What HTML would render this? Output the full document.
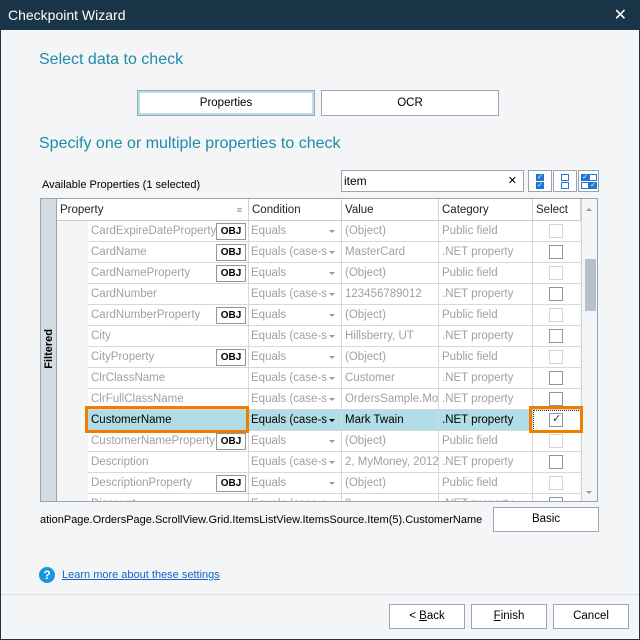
<!DOCTYPE html>
<html><head><meta charset="utf-8"><style>
*{box-sizing:border-box;margin:0;padding:0}
body{width:640px;height:640px;overflow:hidden;background:#f4f5f7;font-family:"Liberation Sans",sans-serif;font-size:12px;color:#000;position:relative}
.a{position:absolute}
.title{left:0;top:0;width:640px;height:30px;background:#1b3548;color:#fff;font-size:14px;padding:7px 0 0 8px}
.frame{left:0;top:30px;width:640px;height:610px;border:1px solid #1b3548;border-top:0}
.h1{color:#1f8ba5;font-size:16px}
.btn{background:#fff;border:1px solid #9aa4b2;text-align:center;font-size:12px}
.grid{left:40px;top:198px;width:558px;height:304px;border:1px solid #9aa4b2;background:#f4f5f7;overflow:hidden}
.cell{position:absolute;height:21px;line-height:20px;border-right:1px solid #d8d8d8;border-bottom:1px solid #d8d8d8;background:#fff;color:#a0a0a0;padding-left:3px;white-space:nowrap;overflow:hidden;font-size:11.5px}
.hd{position:absolute;top:0;height:22px;line-height:22px;background:#fff;border-right:1px solid #d0d0d0;border-bottom:1px solid #c8c8c8;padding-left:3px;color:#222;font-size:11.5px}
.obj{position:absolute;width:30px;height:17px;border:1px solid #8a96a6;background:#fff;color:#000;font-size:10px;font-weight:bold;text-align:center;line-height:15px}
.cb{position:absolute;width:14px;height:14px;border:1px solid #8a96a6;background:#fff}
.cb.l{border-color:#d4d4d4}
.dd{position:absolute;width:0;height:0;border-left:3px solid transparent;border-right:3px solid transparent;border-top:3px solid #999}
.ib{position:absolute;width:8px;height:7px;border:1px solid #1e78d0;background:#fff;font-size:7px;color:#fff;line-height:5px;text-align:center}
.ib.f{background:#1e78d0}
</style></head><body>
<div class="a title">Checkpoint Wizard<span class="a" style="right:13px;top:5px;font-size:16px">✕</span></div>
<div class="a frame"></div>
<div class="a h1" style="left:39px;top:51px">Select data to check</div>
<div class="a btn" style="left:137px;top:90px;width:178px;height:26px;box-shadow:inset 0 0 0 2px #b7dfe8;line-height:24px;font-size:11.5px">Properties</div>
<div class="a btn" style="left:321px;top:90px;width:178px;height:26px;line-height:24px;font-size:11.5px">OCR</div>
<div class="a h1" style="left:39px;top:135px">Specify one or multiple properties to check</div>
<div class="a" style="left:42px;top:179px;font-size:11px">Available Properties (1 selected)</div>
<div class="a" style="left:341px;top:170px;width:183px;height:22px;background:#fff;border:1px solid #9aa4b2;padding:3px 0 0 2px;font-size:12px">item<span class="a" style="right:6px;top:3px;font-size:11px">✕</span></div>
<div class="a" style="left:528px;top:170px;width:24px;height:22px;background:#fff;border:1px solid #9aa4b2"><div class="ib f" style="left:7px;top:3px">✓</div><div class="ib f" style="left:7px;top:11px">✓</div></div>
<div class="a" style="left:553px;top:170px;width:24px;height:22px;background:#fff;border:1px solid #9aa4b2"><div class="ib" style="left:7px;top:3px"></div><div class="ib" style="left:7px;top:11px"></div></div>
<div class="a" style="left:578px;top:170px;width:21px;height:22px;background:#fff;border:1px solid #9aa4b2"><div class="ib f" style="left:2px;top:3px">✓</div><div class="ib" style="left:10px;top:3px"></div><div class="ib" style="left:2px;top:11px"></div><div class="ib f" style="left:10px;top:11px">✓</div></div>

<div class="a grid">
<div class="a" style="left:0;top:0;width:16px;height:302px;background:#d3dce3;border-right:1px solid #9aa4b2"></div>
<div class="a" style="left:2px;top:130px;width:14px;font-weight:bold;font-size:11px;writing-mode:vertical-rl;transform:rotate(180deg)">Filtered</div>
<div class="a" style="left:17px;top:22px;width:31px;height:282px;background:#f4f5f7;border-right:1px solid #d8d8d8"></div>
<div class="hd" style="left:16px;width:192px">Property<span class="a" style="right:6px;top:0;font-size:9px;color:#888">≡</span></div>
<div class="hd" style="left:208px;width:93px">Condition</div>
<div class="hd" style="left:301px;width:97px">Value</div>
<div class="hd" style="left:398px;width:94px">Category</div>
<div class="hd" style="left:492px;width:48px">Select</div>
<div class="a" style="left:540px;top:0;width:18px;height:304px;background:#f4f5f7;border-left:1px solid #d0d0d0"></div>
<div class="a" style="left:544px;top:60px;width:11px;height:52px;background:#b8bfcc"></div>
<div class="dd" style="left:545px;top:9px;border-top:0;border-bottom:3px solid #999"></div>
<div class="dd" style="left:545px;top:292px"></div>
</div>
<div id="g" class="a" style="left:41px;top:199px;width:539px;height:302px;overflow:hidden"></div>
<script>
var R=[["CardExpireDateProperty",1,"Equals","(Object)","Public field",0],
["CardName",1,"Equals (case-se","MasterCard",".NET property",1],
["CardNameProperty",1,"Equals","(Object)","Public field",0],
["CardNumber",0,"Equals (case-se","123456789012",".NET property",1],
["CardNumberProperty",1,"Equals","(Object)","Public field",0],
["City",0,"Equals (case-se","Hillsberry, UT",".NET property",1],
["CityProperty",1,"Equals","(Object)","Public field",0],
["ClrClassName",0,"Equals (case-se","Customer",".NET property",1],
["ClrFullClassName",0,"Equals (case-se","OrdersSample.Mod",".NET property",1],
["CustomerName",0,"Equals (case-se","Mark Twain",".NET property",2],
["CustomerNameProperty",1,"Equals","(Object)","Public field",0],
["Description",0,"Equals (case-se","2, MyMoney, 2012",".NET property",1],
["DescriptionProperty",1,"Equals","(Object)","Public field",0],
["Discount",0,"Equals (case-se","0",".NET property",1]];
var h="";
R.forEach(function(r,i){var y=22+i*21,s=r[5]==2,bg=s?"background:#b0dde6;color:#000;":"";
h+='<div class="cell" style="left:47px;top:'+y+'px;width:161px;'+bg+'">'+r[0]+'</div>';
if(r[1])h+='<div class="obj" style="left:175px;top:'+(y+2)+'px">OBJ</div>';
h+='<div class="cell" style="left:208px;top:'+y+'px;width:93px;padding-left:2px;'+bg+'"><span style="display:block;width:76px;overflow:hidden">'+r[2]+'</span></div><div class="dd" style="left:288px;top:'+(y+9)+'px;'+(s?'border-top-color:#000':'')+'"></div>';
h+='<div class="cell" style="left:301px;top:'+y+'px;width:97px;'+bg+'">'+r[3]+'</div>';
h+='<div class="cell" style="left:398px;top:'+y+'px;width:94px;'+bg+'">'+r[4]+'</div>';
h+='<div class="cell" style="left:492px;top:'+y+'px;width:48px;'+(s?'border:1px dotted #333;':'')+'"></div>';
h+='<div class="cb'+(r[5]?'':' l')+'" style="left:508px;top:'+(y+3)+'px">'+(s?'<span class="a" style="left:2px;top:-2px;font-size:11px;color:#333">✓</span>':'')+'</div>';});
document.getElementById("g").innerHTML=h;
</script>
<div class="a" style="left:85px;top:406px;width:164px;height:27px;border:3px solid #f07d00"></div>
<div class="a" style="left:529px;top:406px;width:54px;height:27px;border:3px solid #f07d00"></div>
<div class="a" style="left:40px;top:514px;width:450px;white-space:nowrap;overflow:hidden;font-size:11px;direction:rtl;text-align:left"><span style="direction:ltr;unicode-bidi:embed">ationPage.OrdersPage.ScrollView.Grid.ItemsListView.ItemsSource.Item(5).CustomerName</span></div>
<div class="a btn" style="left:493px;top:507px;width:106px;height:25px;line-height:23px;font-size:11.5px">Basic</div>
<div class="a" style="left:39px;top:567px;width:16px;height:16px;border-radius:50%;background:#1a96dc;color:#fff;font-weight:bold;font-size:12px;text-align:center;line-height:16px">?</div>
<div class="a" style="left:62px;top:569px;color:#1565c0;text-decoration:underline;font-size:11px">Learn more about these settings</div>
<div class="a" style="left:1px;top:594px;width:638px;height:1px;background:#dde0e4"></div>
<div class="a btn" style="left:389px;top:604px;width:76px;height:25px;line-height:23px;font-size:11.5px">&lt; <u>B</u>ack</div>
<div class="a btn" style="left:471px;top:604px;width:76px;height:25px;line-height:23px;font-size:11.5px"><u>F</u>inish</div>
<div class="a btn" style="left:553px;top:604px;width:76px;height:25px;line-height:23px;font-size:11.5px">Cancel</div>
</body></html>
